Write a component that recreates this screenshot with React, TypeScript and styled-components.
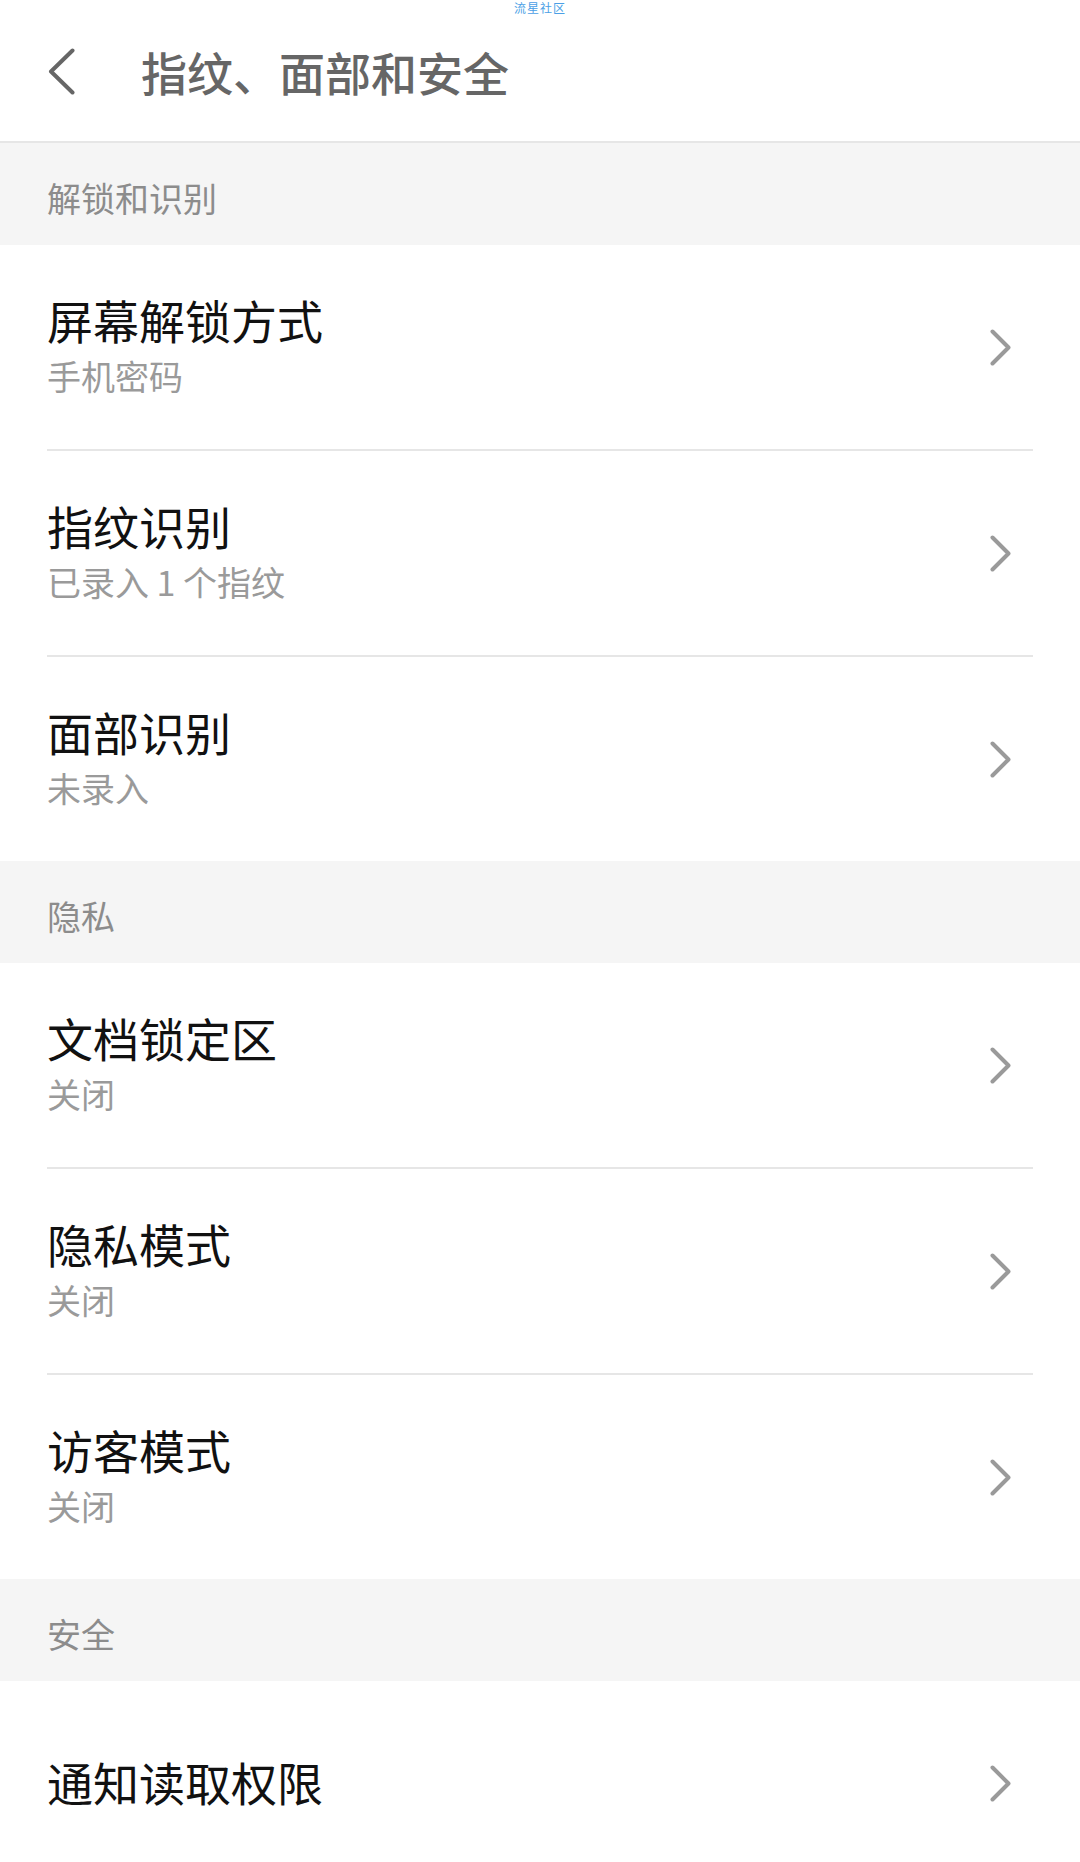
import {Fragment} from "react"
import styled, {createGlobalStyle} from "styled-components"

const GlobalStyle = createGlobalStyle`
    html, body{
        margin: 0;
        padding: 0;
        background: #ffffff;
    }
    body{
        font-family: "Noto Sans CJK SC", "Noto Sans", sans-serif;
    }
`

const Page = styled.div`
    width: 1080px;
    min-height: 1862px;
    background: #ffffff;
    position: relative;
    overflow: hidden;
`

const Watermark = styled.div`
    position: absolute;
    top: 0;
    left: 0;
    right: 0;
    text-align: center;
    font-size: 12px;
    line-height: 16px;
    letter-spacing: 1px;
    color: #4b9fe6;
`

const Header = styled.div`
    height: 141px;
    display: flex;
    flex-direction: row;
    align-items: center;
    padding-left: 48px;
    border-bottom: 2px solid #e6e6e6;
    box-sizing: content-box;
    .title{
        margin-left: 66px;
        font-size: 46px;
        line-height: 50px;
        font-weight: 500;
        color: #666666;
    }
`

const BackIcon = styled.svg`
    width: 27px;
    height: 47px;
    display: block;
    margin-top: 2px;
`

const SectionHeader = styled.div`
    height: 102px;
    background: #f5f5f5;
    display: flex;
    flex-direction: row;
    align-items: center;
    padding: 8px 47px 0 47px;
    box-sizing: border-box;
    font-size: 34px;
    line-height: 40px;
    color: #8c8c8c;
`

const List = styled.div`
    padding: 0 47px;
`

const Row = styled.div<{$divider: boolean}>`
    height: 204px;
    display: flex;
    flex-direction: row;
    align-items: center;
    justify-content: space-between;
    border-top: ${p => p.$divider ? "2px solid #e6e6e6" : "none"};
    box-sizing: content-box;
    .texts{
        display: flex;
        flex-direction: column;
        margin-bottom: 5px;
    }
    .label{
        font-size: 46px;
        line-height: 50px;
        color: #111111;
    }
    .sub{
        margin-top: 12px;
        font-size: 34px;
        line-height: 40px;
        color: #9a9a9a;
    }
`

const Chevron = styled.svg`
    width: 21px;
    height: 37px;
    display: block;
    margin-right: 22px;
`

type Item = {label: string, sub?: string}

const sections: {title: string, items: Item[]}[] = [
    {
        title: "解锁和识别",
        items: [
            {label: "屏幕解锁方式", sub: "手机密码"},
            {label: "指纹识别", sub: "已录入 1 个指纹"},
            {label: "面部识别", sub: "未录入"},
        ],
    },
    {
        title: "隐私",
        items: [
            {label: "文档锁定区", sub: "关闭"},
            {label: "隐私模式", sub: "关闭"},
            {label: "访客模式", sub: "关闭"},
        ],
    },
    {
        title: "安全",
        items: [
            {label: "通知读取权限"},
        ],
    },
]

export default function App(){
    return (
        <>
            <GlobalStyle />
            <Page>
                <Watermark>流星社区</Watermark>

                <Header>
                    <BackIcon viewBox="0 0 27 47">
                        <polyline points="24.5,2.5 3,23.5 24.5,44.5" fill="none" stroke="#666666" strokeWidth="4" strokeLinecap="round" strokeLinejoin="round" />
                    </BackIcon>
                    <div className="title">指纹、面部和安全</div>
                </Header>

                {
                    sections.map( (section) => (
                        <Fragment key={section.title}>
                            <SectionHeader>{section.title}</SectionHeader>
                            <List>
                                {
                                    section.items.map( (item, i) => (
                                        <Row key={item.label} $divider={i > 0}>
                                            <div className="texts">
                                                <div className="label">{item.label}</div>
                                                {item.sub && <div className="sub">{item.sub}</div>}
                                            </div>
                                            <Chevron viewBox="0 0 21 37">
                                                <polyline points="2.5,2.5 18.5,18.5 2.5,34.5" fill="none" stroke="#9a9a9a" strokeWidth="4" strokeLinecap="round" strokeLinejoin="round" />
                                            </Chevron>
                                        </Row>
                                    ) )
                                }
                            </List>
                        </Fragment>
                    ) )
                }
            </Page>
        </>
    )
}
